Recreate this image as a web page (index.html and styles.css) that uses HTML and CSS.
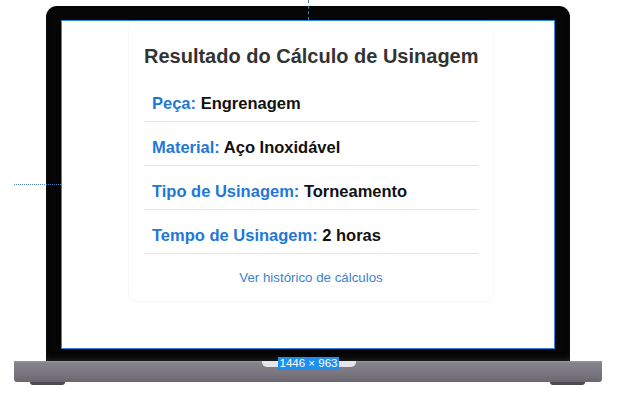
FILE: index.html
```html
<!DOCTYPE html>
<html lang="pt">
<head>
<meta charset="utf-8">
<title>Resultado do Cálculo de Usinagem</title>
<link rel="stylesheet" href="styles.css">
</head>
<body>
<div class="stage">
  <div class="guide-v"></div>
  <div class="guide-h"></div>
  <div class="lid">
    <div class="screen">
      <div class="card">
        <h1 class="title">Resultado do Cálculo de Usinagem</h1>
        <div class="row"><span class="label">Peça:</span> <span class="value">Engrenagem</span></div>
        <div class="row"><span class="label">Material:</span> <span class="value">Aço Inoxidável</span></div>
        <div class="row"><span class="label">Tipo de Usinagem:</span> <span class="value">Torneamento</span></div>
        <div class="row"><span class="label">Tempo de Usinagem:</span> <span class="value">2 horas</span></div>
        <a class="link" href="#">Ver histórico de cálculos</a>
      </div>
    </div>
  </div>
  <div class="base">
    <div class="notch"></div>
    <div class="size-badge">1446 × 963</div>
  </div>
  <div class="feet">
    <div class="foot"></div>
    <div class="foot"></div>
  </div>
</div>
</body>
</html>
```

FILE: styles.css
```css
html, body {
  margin: 0;
  padding: 0;
  background: #ffffff;
}
.stage {
  position: relative;
  width: 624px;
  height: 400px;
  overflow: hidden;
  font-family: "Liberation Sans", Arial, sans-serif;
  padding-top: 6px;
  box-sizing: border-box;
}
.guide-v {
  position: absolute;
  left: 308px;
  top: 0;
  height: 20px;
  border-left: 1px dashed #4f7fae;
  z-index: 2;
}
.guide-h {
  position: absolute;
  left: 14px;
  top: 184px;
  width: 47px;
  border-top: 1px dotted #4a7fb8;
}
.lid {
  margin-left: 46px;
  width: 524px;
  height: 355px;
  box-sizing: border-box;
  padding: 14px 15px 12px;
  background: #050505;
  border-radius: 11px 11px 0 0;
  box-shadow: inset 0 -4px 6px -3px #2a2a2c;
}
.screen {
  height: 100%;
  box-sizing: border-box;
  border: 1px solid #2a8be0;
  background: #ffffff;
  padding-top: 2px;
}
.card {
  width: 366px;
  margin-left: 66px;
  box-sizing: border-box;
  padding: 20px 15px 15px;
  border: 1px solid #f8f8f8;
  border-radius: 8px;
  box-shadow: 0 1px 3px rgba(0, 0, 0, 0.015);
}
.title {
  margin: 0 0 10px;
  font-size: 20px;
  line-height: 24px;
  font-weight: bold;
  color: #333333;
  white-space: nowrap;
}
.row {
  padding: 16px 8px 9px;
  font-size: 16.5px;
  line-height: 18px;
  font-weight: bold;
  border-bottom: 1px solid #e4e4e4;
}
.label {
  color: #1f78d8;
}
.value {
  color: #111111;
}
.link {
  display: block;
  margin-top: 16px;
  text-align: center;
  font-size: 13.3px;
  line-height: 16px;
  color: #3b84d2;
  text-decoration: none;
}
.base {
  position: relative;
  margin-left: 14px;
  width: 588px;
  height: 21px;
  background: linear-gradient(#9c98a1 0, #86828b 2px, #7a767f 60%, #6a666f 100%);
  border-radius: 0 0 3px 3px;
}
.notch {
  position: absolute;
  left: 248px;
  top: 0;
  width: 94px;
  height: 6px;
  background: #e6e5ea;
  border-radius: 0 0 5px 5px;
}
.size-badge {
  position: absolute;
  left: 264px;
  top: -4px;
  width: 61px;
  height: 13px;
  background: #1c8ff0;
  color: #ffffff;
  font-size: 11.5px;
  line-height: 13px;
  text-align: center;
}
.feet {
  display: flex;
  justify-content: space-between;
  margin-left: 30px;
  width: 555px;
}
.foot {
  width: 35px;
  height: 3px;
  background: #4c4b50;
  border-radius: 0 0 12px 12px;
}
```
